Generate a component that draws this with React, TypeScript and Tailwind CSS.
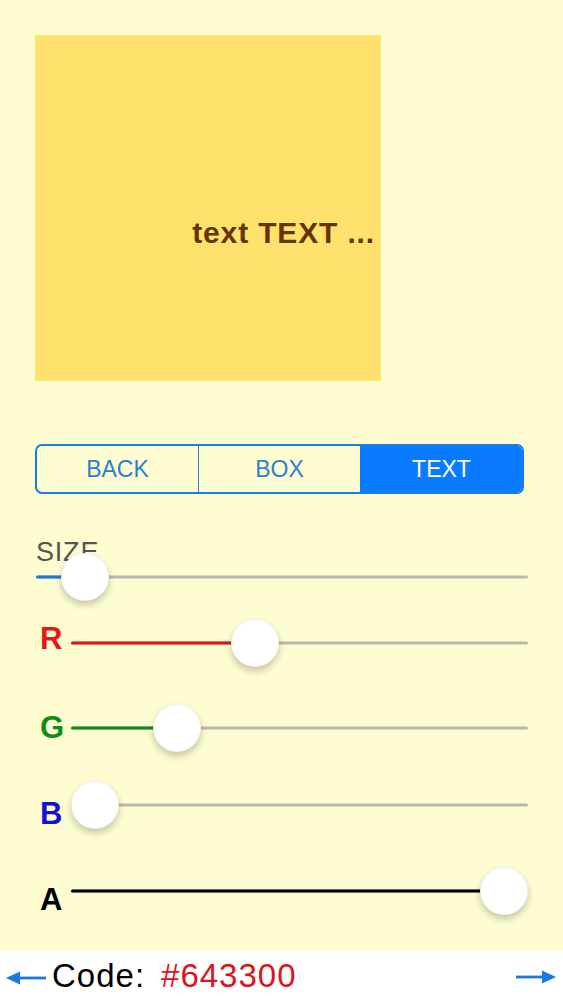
import React from "react";

const font = "font-['Liberation_Sans',Arial,Helvetica,sans-serif]";

type SliderProps = {
  value: number;
  fill: string;
};

// track with a filled part up to the thumb, thumb overlays the track
const Slider = ({ value, fill }: SliderProps) => {
  const pos = `calc(${value} * (100% - 48px) + 24px)`;
  return (
    <div className="relative h-[48px] flex-1">
      <div className="absolute left-0 right-0 top-1/2 h-[3px] -translate-y-1/2 rounded-full bg-[#b8b8b0]" />
      <div
        className={`absolute left-0 top-1/2 h-[3px] -translate-y-1/2 rounded-full ${fill}`}
        style={{ width: pos }}
      />
      <div
        className="absolute top-0 h-[48px] w-[48px] -translate-x-1/2 rounded-full border border-black/5 bg-white shadow-[0_4px_7px_rgba(0,0,0,0.22)]"
        style={{ left: pos }}
      />
    </div>
  );
};

const Arrow = ({ flip }: { flip?: boolean }) => (
  <svg
    width="40"
    height="16"
    viewBox="0 0 40 16"
    className={flip ? "rotate-180" : ""}
  >
    <path d="M0 8 L14 1.5 L14 14.5 Z" fill="#1a78e0" />
    <rect x="12" y="6.6" width="28" height="2.8" fill="#1a78e0" />
  </svg>
);

const App = () => {
  const channels = [
    { label: "R", value: 0.392, text: "text-[#e5161b]", fill: "bg-[#e01414]", mt: "mt-[18px]", lt: "-translate-y-[5px]" },
    { label: "G", value: 0.2, text: "text-[#118c14]", fill: "bg-[#128c14]", mt: "mt-[37px]", lt: "-translate-y-[1px]" },
    { label: "B", value: 0, text: "text-[#1212d6]", fill: "bg-[#1212d6]", mt: "mt-[29px]", lt: "translate-y-[8px]" },
    { label: "A", value: 1, text: "text-black", fill: "bg-black", mt: "mt-[38px]", lt: "translate-y-[8px]" },
  ];

  return (
    <div className={`flex w-[563px] flex-col ${font}`}>
      <div className="flex h-[951px] flex-col bg-[#fdfdd1] pt-[35px]">
        {/* Preview box */}
        <div className="ml-[35px] flex h-[346px] w-[346px] items-start justify-end bg-[#ffe26e] pr-[6px] pt-[183px]">
          <span className="text-[30px] font-bold leading-none tracking-[0.85px] text-[#643300]">
            text TEXT ...
          </span>
        </div>

        {/* Segmented control */}
        <div className="ml-[35px] mt-[63px] flex h-[50px] w-[489px] overflow-hidden rounded-[7px] border-2 border-[#1a7ae6]">
          <div className="flex flex-1 items-center justify-center border-r-[1.5px] border-[#1a7ae6] text-[23px] text-[#2b7fd4]">
            BACK
          </div>
          <div className="flex flex-1 items-center justify-center border-r-[1.5px] border-[#1a7ae6] text-[23px] text-[#2b7fd4]">
            BOX
          </div>
          <div className="flex flex-1 items-center justify-center bg-[#0a7bff] text-[23px] text-white">
            TEXT
          </div>
        </div>

        {/* Size */}
        <div className="ml-[36px] mt-[45px] text-[27px] leading-none tracking-[0.8px] text-[#56564c]">
          SIZE
        </div>
        <div className="-mt-[13px] flex pl-[36px] pr-[35px]">
          <Slider value={0.056} fill="bg-[#1a78e0]" />
        </div>

        {/* RGBA */}
        {channels.map((c) => (
          <div key={c.label} className={`flex items-center pl-[40px] pr-[35px] ${c.mt}`}>
            <span
              className={`w-[31px] text-[31px] font-bold leading-none ${c.text} ${c.lt}`}
            >
              {c.label}
            </span>
            <Slider value={c.value} fill={c.fill} />
          </div>
        ))}
      </div>

      {/* Code bar */}
      <div className="flex h-[49px] items-center bg-white">
        <div className="ml-[6px] mt-[5px]">
          <Arrow />
        </div>
        <span className="ml-[6px] text-[33px] leading-none tracking-[1px] text-black">
          Code:
        </span>
        <span className="ml-[16px] text-[33px] leading-none tracking-[1px] text-[#d8161b]">
          #643300
        </span>
        <div className="ml-auto mr-[7px] mt-[3px]">
          <Arrow flip />
        </div>
      </div>
    </div>
  );
};

export default App;
